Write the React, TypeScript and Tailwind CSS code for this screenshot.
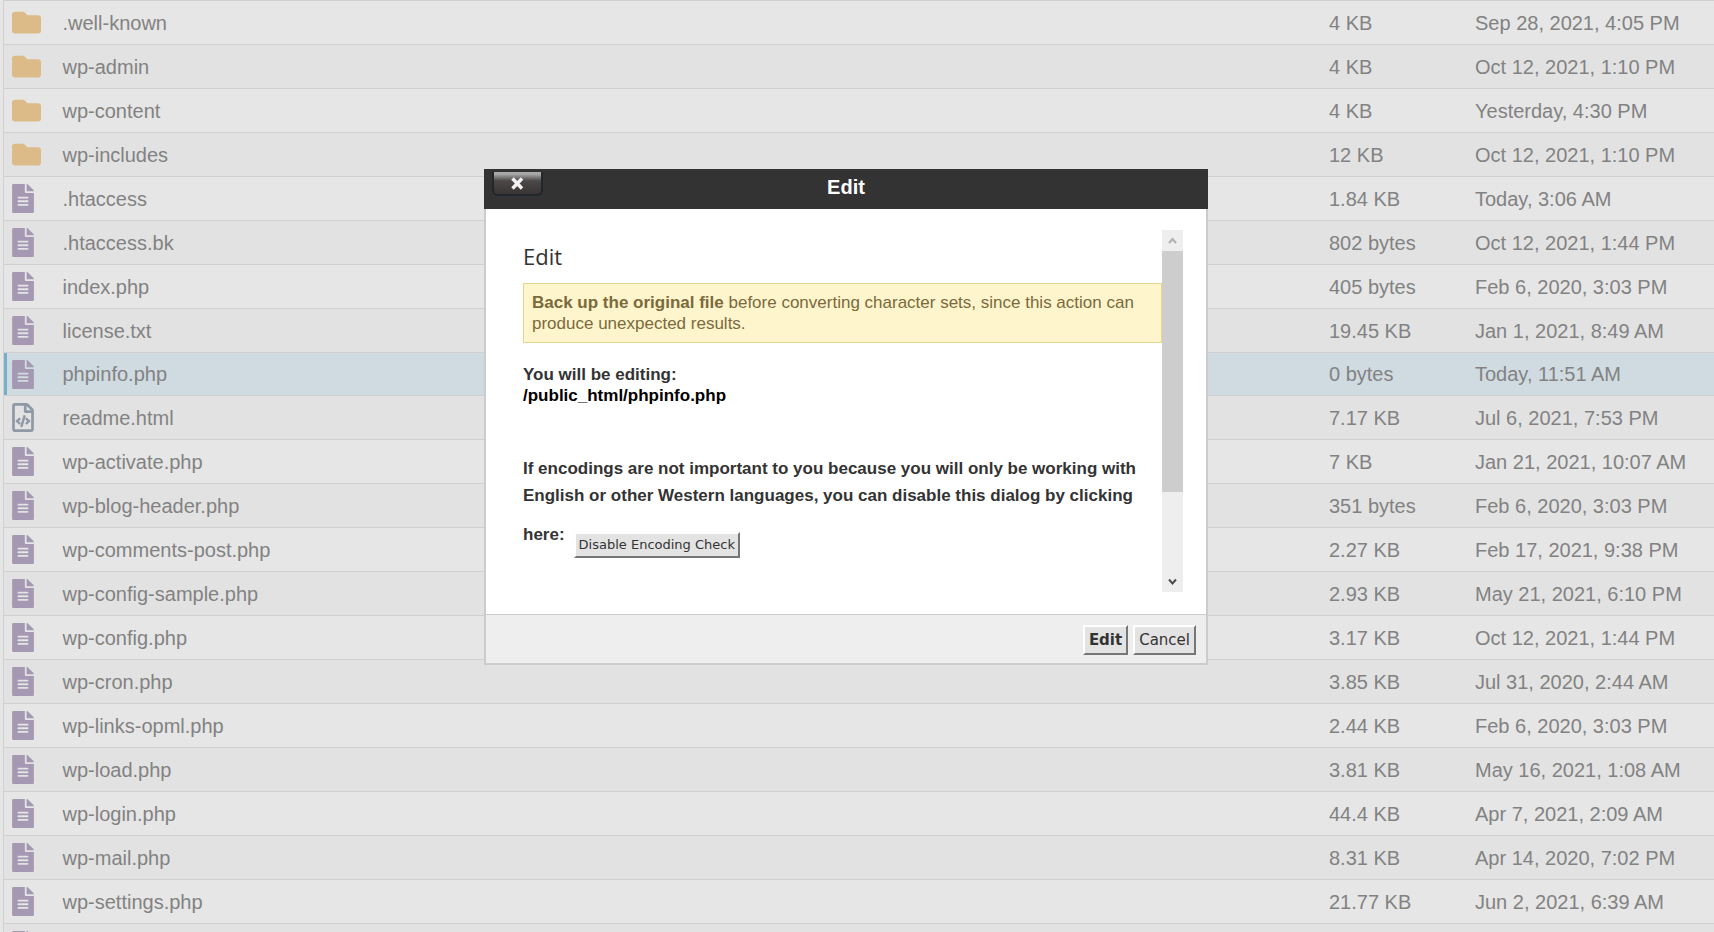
import React from "react";
import { FaFileAlt, FaFolder, FaRegFileCode } from "react-icons/fa";

type FileRow = {
  kind: "folder" | "file" | "code";
  name: string;
  size: string;
  modified: string;
};

const files: FileRow[] = [
  { kind: "folder", name: ".well-known", size: "4 KB", modified: "Sep 28, 2021, 4:05 PM" },
  { kind: "folder", name: "wp-admin", size: "4 KB", modified: "Oct 12, 2021, 1:10 PM" },
  { kind: "folder", name: "wp-content", size: "4 KB", modified: "Yesterday, 4:30 PM" },
  { kind: "folder", name: "wp-includes", size: "12 KB", modified: "Oct 12, 2021, 1:10 PM" },
  { kind: "file", name: ".htaccess", size: "1.84 KB", modified: "Today, 3:06 AM" },
  { kind: "file", name: ".htaccess.bk", size: "802 bytes", modified: "Oct 12, 2021, 1:44 PM" },
  { kind: "file", name: "index.php", size: "405 bytes", modified: "Feb 6, 2020, 3:03 PM" },
  { kind: "file", name: "license.txt", size: "19.45 KB", modified: "Jan 1, 2021, 8:49 AM" },
  { kind: "file", name: "phpinfo.php", size: "0 bytes", modified: "Today, 11:51 AM" },
  { kind: "code", name: "readme.html", size: "7.17 KB", modified: "Jul 6, 2021, 7:53 PM" },
  { kind: "file", name: "wp-activate.php", size: "7 KB", modified: "Jan 21, 2021, 10:07 AM" },
  { kind: "file", name: "wp-blog-header.php", size: "351 bytes", modified: "Feb 6, 2020, 3:03 PM" },
  { kind: "file", name: "wp-comments-post.php", size: "2.27 KB", modified: "Feb 17, 2021, 9:38 PM" },
  { kind: "file", name: "wp-config-sample.php", size: "2.93 KB", modified: "May 21, 2021, 6:10 PM" },
  { kind: "file", name: "wp-config.php", size: "3.17 KB", modified: "Oct 12, 2021, 1:44 PM" },
  { kind: "file", name: "wp-cron.php", size: "3.85 KB", modified: "Jul 31, 2020, 2:44 AM" },
  { kind: "file", name: "wp-links-opml.php", size: "2.44 KB", modified: "Feb 6, 2020, 3:03 PM" },
  { kind: "file", name: "wp-load.php", size: "3.81 KB", modified: "May 16, 2021, 1:08 AM" },
  { kind: "file", name: "wp-login.php", size: "44.4 KB", modified: "Apr 7, 2021, 2:09 AM" },
  { kind: "file", name: "wp-mail.php", size: "8.31 KB", modified: "Apr 14, 2020, 7:02 PM" },
  { kind: "file", name: "wp-settings.php", size: "21.77 KB", modified: "Jun 2, 2021, 6:39 AM" },
  { kind: "file", name: "", size: "", modified: "" },
];

const selected = "phpinfo.php";

const FileIcon: React.FC<{ kind: FileRow["kind"] }> = ({ kind }) => {
  if (kind === "folder") return <FaFolder className="w-[29px] h-[29px] text-[#dcbb88]" />;
  if (kind === "code") return <FaRegFileCode className="w-[22px] h-[29px] text-[#8f99a5]" />;
  return <FaFileAlt className="w-[22px] h-[29px] text-[#a598b3]" />;
};

const FileTable: React.FC = () => (
  <table className="w-full border-collapse text-xl text-[#828282]">
    <tbody>
      {files.map((file, i) => (
        <tr
          key={i}
          className={`border-t border-[#d0d0d0] ${
            file.name === selected ? "h-[43px] bg-[#d0dbe1]" : i % 2 ? "h-11 bg-[#e2e2e2]" : "h-11 bg-[#e6e6e6]"
          }`}
        >
          <td
            className={`w-[55px] p-0 border-l border-l-[#d0d0d0] ${
              file.name === selected ? "shadow-[inset_3px_0_0_#77afc9]" : ""
            }`}
          >
            <div className="pl-2">
              <FileIcon kind={file.kind} />
            </div>
          </td>
          <td className="p-0 pl-1">{file.name}</td>
          <td className="w-[146px] p-0">{file.size}</td>
          <td className="w-[239px] p-0 whitespace-nowrap">{file.modified}</td>
        </tr>
      ))}
    </tbody>
  </table>
);

const ScrollBar: React.FC = () => (
  <div className="flex flex-col w-[21px] shrink-0 bg-[#eeeeee]">
    <button type="button" aria-label="Scroll up" className="flex items-center justify-center h-[21px]">
      <svg width="9" height="8" viewBox="0 0 9 8" fill="none" stroke="#b0b0b0" strokeWidth="2">
        <path d="M1 6 4.5 2 8 6" />
      </svg>
    </button>
    <div className="h-[241px] bg-[#cdcdcd]" />
    <button type="button" aria-label="Scroll down" className="flex items-center justify-center h-[21px] mt-auto">
      <svg width="9" height="8" viewBox="0 0 9 8" fill="none" stroke="#4d4d4d" strokeWidth="2">
        <path d="M1 1.5 4.5 5.5 8 1.5" />
      </svg>
    </button>
  </div>
);

const buttonStyle =
  "border-2 border-t-white border-l-white border-r-[#767676] border-b-[#767676] bg-[#e3e3e3] font-['DejaVu_Sans',sans-serif] text-[#333]";

const EditDialog: React.FC = () => (
  <div role="dialog" aria-label="Edit" className="w-[724px] bg-white">
    <div className="relative flex items-start justify-center h-10 pt-1 bg-[#333]">
      <button
        type="button"
        aria-label="Close"
        className="absolute left-2 top-[3px] flex items-center justify-center w-[51px] h-6 rounded-b-md border-2 border-t-0 border-[#22272b] bg-linear-to-b from-[#a8a8a8] from-10% via-[#4c4848] via-40% to-[#3a3434]"
      >
        <svg width="14" height="13" viewBox="0 0 14 13" stroke="#f2f2f2" strokeWidth="3.4">
          <path d="M1.5 1.5 11 11.5M11 1.5 1.5 11.5" />
        </svg>
      </button>
      <h1 className="text-xl font-bold text-white">Edit</h1>
    </div>

    <div className="border-x-2 border-b-2 border-[#cccccc]">
      <div className="flex h-[405px] pt-[21px] pb-[22px] pl-[37px] pr-[23px]">
        <div className="flex-1 overflow-hidden text-[17px] font-bold text-[#333]">
          <h2 className="mt-[11px] font-['Open_Sans',sans-serif] text-[22px] leading-[30px] font-normal">Edit</h2>
          <p className="mt-3 px-2 py-2 border border-[#e3d68f] bg-[#fff5cc] leading-[21px] font-normal text-[#7a6a3c]">
            <strong>Back up the original file</strong> before converting character sets, since this action can produce
            unexpected results.
          </p>
          <p className="mt-[21px] leading-[21px]">
            You will be editing:
            <br />
            <span className="text-black">/public_html/phpinfo.php</span>
          </p>
          <p className="mt-[49px] leading-[27px]">
            If encodings are not important to you because you will only be working with English or other Western
            languages, you can disable this dialog by clicking
          </p>
          <div className="flex items-start mt-3 gap-[9px]">
            <span className="leading-[27px]">here:</span>
            <button type="button" className={`mt-[11px] h-[26px] px-[3px] text-[13px] font-normal ${buttonStyle}`}>
              Disable Encoding Check
            </button>
          </div>
        </div>
        <ScrollBar />
      </div>

      <div className="flex justify-end gap-[5px] pt-[10px] pb-2 pr-[10px] border-t border-[#cccccc] bg-[#eeeeee]">
        <button type="button" className={`h-[30px] px-1 text-[15px] font-bold ${buttonStyle}`}>
          Edit
        </button>
        <button type="button" className={`h-[30px] px-1 text-[15px] ${buttonStyle}`}>
          Cancel
        </button>
      </div>
    </div>
  </div>
);

const App: React.FC = () => {
  return (
    <main className="relative h-screen overflow-hidden bg-[#e6e6e6] pl-[3px] font-['Liberation_Sans',Arial,sans-serif]">
      <FileTable />
      <div className="absolute inset-0 flex items-start justify-center pt-[169px] pr-[22px]">
        <EditDialog />
      </div>
    </main>
  );
};

export default App;
